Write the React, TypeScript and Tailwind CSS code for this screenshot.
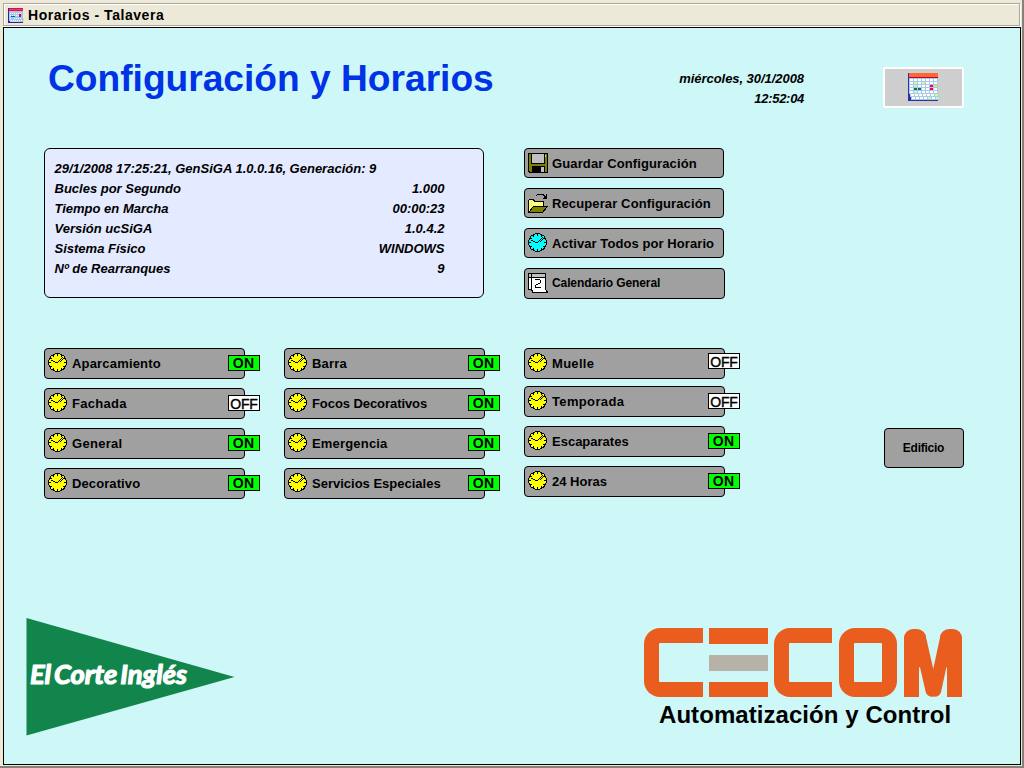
import React from "react";

const SANS = "font-['Liberation_Sans',Arial,sans-serif]";

function MonthSheet({ className }: { className: string }) {
  const cells: React.ReactNode[] = [];
  const marks: Record<string, string> = {
    "1-1": "#c8ff90", "1-3": "#c8ff90", "2-1": "#c8ff90", "2-5": "#ff0040", "2-6": "#c0f850",
    "3-1": "#087070", "3-2": "#087070", "3-5": "#ff0040", "4-1": "#c8ff90",
    "5-6": "#c8ff90", "6-4": "#c8ff90", "6-6": "#c8ff90",
  };
  for (let r = 0; r < 7; r++) {
    for (let c = 0; c < 7; c++) {
      const shift = r === 5 ? 1 : r === 6 ? 2 : 0;
      cells.push(
        <rect key={`${r}-${c}`} x={2 + c * 4 + shift} y={6 + r * 3} width={3} height={2} fill={marks[`${r}-${c}`] ?? "#fff"} />
      );
    }
  }
  return (
    <svg className={className} viewBox="0 0 32 28" shapeRendering="crispEdges" preserveAspectRatio="none">
      <rect x="0" y="0" width="30" height="28" fill="#3030a0" />
      <rect x="1" y="0" width="29" height="4" fill="#ff6830" />
      <rect x="1" y="4" width="29" height="1" fill="#c00030" />
      <rect x="1" y="5" width="29" height="16" fill="#a8c8f0" />
      <rect x="2" y="21" width="29" height="3" fill="#a8c8f0" />
      <rect x="3" y="24" width="29" height="3" fill="#a8c8f0" />
      {cells}
    </svg>
  );
}

function MiniSheet() {
  return (
    <svg className="h-[15px] w-4" viewBox="0 0 16 15" shapeRendering="crispEdges">
      <rect width="15" height="15" fill="#3020a0" />
      <rect x="1" width="14" height="3" fill="#f00838" />
      <rect x="1" y="1" width="14" height="1" fill="#d84868" />
      <rect x="1" y="3" width="14" height="10" fill="#a0c8f8" />
      <rect x="2" y="13" width="14" height="1" fill="#b8d8f8" />
      <path d="M2 5.5h12M2 7.5h12M2 10.5h12M3 12.5h12" stroke="#fff" strokeDasharray="1 1" />
      <path d="M3 8.5h4" stroke="#087070" />
      <rect x="11" y="6" width="2" height="3" fill="#d00038" />
      <path d="M3 6.5h2M13 7.5h1M3 10.5h2M14 11.5h2M12 13.5h3" stroke="#90d890" />
    </svg>
  );
}

function Clock({ color = "#ffff00" }: { color?: string }) {
  return (
    <svg className="size-[19px]" viewBox="0 0 19 19" shapeRendering="crispEdges">
      <circle cx="9.5" cy="9.5" r="9" fill={color} stroke="#000" />
      <path
        d="M9.5 1v2M9.5 16v2M1 9.500h2M16 9.500h2M5 2l1 2M2 5l2 1M14 17l-1 -2M17 14l-2 -1M5 17l1 -2M2 14l2 -1M14 2l-1 2M17 5l-2 1"
        stroke="#000"
        fill="none"
      />
      <g fill="#000">
        <rect x="3" y="7" width="2" height="1" />
        <rect x="5" y="8" width="2" height="1" />
        <rect x="7" y="9" width="3" height="1" />
        <rect x="10" y="8" width="1" height="1" />
        <rect x="11" y="7" width="1" height="1" />
        <rect x="12" y="6" width="1" height="1" />
        <rect x="13" y="5" width="1" height="1" />
        <rect x="14" y="4" width="1" height="1" />
        <rect x="12" y="8" width="1" height="1" />
        <rect x="13" y="7" width="1" height="1" />
        <rect x="14" y="6" width="1" height="1" />
      </g>
    </svg>
  );
}

function Floppy() {
  return (
    <svg className="size-5" viewBox="0 0 20 20" shapeRendering="crispEdges">
      <path d="M0 0h20v20h-19l-1 -1z" fill="#000" />
      <path d="M1 1h18v18h-17l-1 -1z" fill="#808000" />
      <rect x="3" y="0" width="14" height="11" fill="#000" />
      <rect x="4" y="1" width="12" height="9" fill="#c0c0c0" />
      <rect x="17" y="2" width="1" height="2" fill="#c0c0c0" />
      <rect x="4" y="13" width="13" height="6" fill="#000" />
      <rect x="13" y="14" width="3" height="5" fill="#c0c0c0" />
    </svg>
  );
}

function Folder() {
  return (
    <svg className="size-5" viewBox="0 0 20 20" shapeRendering="crispEdges">
      <defs>
        <pattern id="dither" width="2" height="2" patternUnits="userSpaceOnUse">
          <rect width="2" height="2" fill="#ffff00" />
          <rect width="1" height="1" fill="#fff" />
          <rect x="1" y="1" width="1" height="1" fill="#fff" />
        </pattern>
      </defs>
      <path d="M0.500 19V7.500l1 -1h4l1 2h9v5" fill="url(#dither)" stroke="#000" />
      <path d="M0.500 19.500l5 -6h14l-5 6z" fill="#808000" stroke="#000" />
      <path d="M8.500 2.500l2 -1.500h4l3 3M18.500 1v4h-4M16 4.500h2" fill="none" stroke="#000" />
    </svg>
  );
}

function CalendarTwo() {
  return (
    <svg className="size-5" viewBox="0 0 20 20" shapeRendering="crispEdges">
      <path d="M0.500 0.500h17v16l2 2.500h-15l-1 -3h-3z" fill="#fff" stroke="#000" />
      <rect x="1" y="1" width="16" height="3" fill="#c0c0c0" />
      <path d="M1 4.500h16M3.500 1v15" stroke="#000" />
      <path d="M7 6.500h5M12.500 7v3M12 10.500h-2M10 11.500h-2M8 12.500h-1M7 14.500h6M7.500 13v2" fill="none" stroke="#000" />
    </svg>
  );
}

function ActionButton({ icon, label, size = "h-[30px] w-[200px]", text = "pt-px text-[13px] tracking-[0.12px]" }: { icon: React.ReactNode; label: string; size?: string; text?: string }) {
  return (
    <button className={`flex items-start rounded-[4px] border border-black bg-[#a0a0a0] pt-1 pl-[3px] text-left font-bold whitespace-nowrap ${size}`}>
      <span className="flex w-6 shrink-0">{icon}</span>
      <span className={`leading-5 ${text}`}>{label}</span>
    </button>
  );
}

type ZoneInfo = { label: string; on: boolean; high?: boolean; tracking?: string };

function Zone({ label, on, high = false, tracking = "tracking-[0.18px]" }: ZoneInfo) {
  return (
    <div className="relative h-[31px] w-[201px]">
      <button className="flex h-full w-full items-start rounded-[4px] border border-black bg-[#a0a0a0] pt-1 pl-[3px] text-left text-[13px] font-bold whitespace-nowrap">
        <span className="flex w-6 shrink-0"><Clock /></span>
        <span className={`pt-px leading-5 ${tracking}`}>{label}</span>
      </button>
      <span
        className={`absolute left-[184px] flex h-4 w-8 items-center justify-center border border-black leading-none ${high ? "top-[5px]" : "top-[7px]"} ${
          on ? "bg-[#00ff00] pr-px text-[14px] font-bold tracking-[0.3px]" : "bg-white pt-px text-[14px] font-normal tracking-[-0.2px] [-webkit-text-stroke:0.4px_#000]"
        }`}
      >
        {on ? "ON" : "OFF"}
      </span>
    </div>
  );
}

const zones: ZoneInfo[][] = [
  [
    { label: "Aparcamiento", on: true },
    { label: "Fachada", on: false, tracking: "tracking-[0.3px]" },
    { label: "General", on: true, tracking: "tracking-[0.3px]" },
    { label: "Decorativo", on: true, tracking: "tracking-[0.1px]" },
  ],
  [
    { label: "Barra", on: true },
    { label: "Focos Decorativos", on: true, tracking: "tracking-[-0.07px]" },
    { label: "Emergencia", on: true },
    { label: "Servicios Especiales", on: true, tracking: "tracking-[0px]" },
  ],
  [
    { label: "Muelle", on: false, high: true, tracking: "tracking-[0.3px]" },
    { label: "Temporada", on: false, tracking: "tracking-[0.35px]" },
    { label: "Escaparates", on: true, tracking: "tracking-[0px]" },
    { label: "24 Horas", on: true, tracking: "tracking-[0px]" },
  ],
];

const info = [
  ["Bucles por Segundo", "1.000"],
  ["Tiempo en Marcha", "00:00:23"],
  ["Versión ucSiGA", "1.0.4.2"],
  ["Sistema Físico", "WINDOWS"],
  ["Nº de Rearranques", "9"],
];

function Pennant() {
  return (
    <svg className="h-[118px] w-[210px]" viewBox="0 0 210 118" role="img">
      <path d="M0.500 0v117.500L208.500 59z" fill="#12854c" />
      <text
        x="4"
        y="66"
        className="font-[Lato,sans-serif] text-[27px] font-bold italic"
        fill="#fff"
        stroke="#fff"
        strokeWidth="1.200"
        strokeLinejoin="round"
        wordSpacing="-3"
        textLength="157"
        lengthAdjust="spacingAndGlyphs"
      >
        El Corte Inglés
      </text>
    </svg>
  );
}

function CecomMark() {
  return (
    <div className="flex h-[69px] gap-[6px]">
      <div className="w-[59px] rounded-l-[16px] border-y-[15px] border-l-[15px] border-[#e95d1f]" />
      <div className="flex w-[59px] flex-col justify-between">
        <div className="h-4 bg-[#e95d1f]" />
        <div className="h-4 bg-[#b7b2a7]" />
        <div className="h-[15px] bg-[#e95d1f]" />
      </div>
      <div className="w-[58px] rounded-l-[16px] border-y-[15px] border-l-[15px] border-[#e95d1f]" />
      <div className="ml-px w-[58px] rounded-[16px] border-[15px] border-[#e95d1f]" />
      <svg className="ml-px h-[69px] w-[58px]" viewBox="0 0 58 69">
        <g stroke="#e95d1f" strokeWidth="15" fill="none">
          <line x1="7.500" y1="9" x2="7.500" y2="69" />
          <line x1="50.500" y1="9" x2="50.500" y2="69" />
          <line x1="15.500" y1="9" x2="27.800" y2="62.500" strokeWidth="12.500" strokeLinecap="round" />
          <line x1="42.500" y1="9" x2="31" y2="62.500" strokeWidth="12.500" strokeLinecap="round" />
          <line x1="12" y1="12" x2="20" y2="38" strokeWidth="12" />
          <line x1="46" y1="12" x2="38" y2="38" strokeWidth="12" />
        </g>
        <rect x="0" y="1" width="22" height="22" rx="9" fill="#e95d1f" />
        <rect x="36" y="1" width="22" height="22" rx="9" fill="#e95d1f" />
      </svg>
    </div>
  );
}

export default function App() {
  return (
    <div className={`flex h-[768px] w-[1024px] flex-col overflow-hidden border-r-2 border-b-2 border-[#85827a] bg-[#ece9d8] text-black ${SANS}`}>
      <header className="mt-[3px] ml-[3px] h-[23px] w-[1017px] shrink-0 border border-[#aca899] shadow-[1px_1px_0_#ffffff]">
        <div className="flex h-full items-center border-t border-l border-white pl-[3px]">
          <MiniSheet />
          <h1 className="ml-[4px] text-[14px] leading-5 font-bold tracking-[0.55px]">Horarios - Talavera</h1>
        </div>
      </header>
      <div className="mt-px flex h-[738px] shrink-0 pl-[3px]">
        <main className="flex h-[738px] w-[1018px] shrink-0 flex-col border border-black bg-[#cef7f7] pl-[40px]">
          <section className="flex h-[120px] items-start">
            <h2 className="mt-[28px] ml-[4px] w-[596px] text-[37.150px] leading-[44px] font-bold whitespace-nowrap text-[#0032e6]">Configuración y Horarios</h2>
            <div className="mt-[41px] w-[160px] text-right text-[13px] leading-5 font-bold tracking-[-0.05px] italic">
              <p>miércoles, 30/1/2008</p>
              <p className="tracking-[-0.3px]">12:52:04</p>
            </div>
            <button className="mt-[39px] ml-[79px] flex h-[41px] w-[81px] items-start rounded-[2px] border-2 border-white bg-[#cecece] pt-1 pl-[23px]">
              <MonthSheet className="h-7 w-8" />
            </button>
          </section>

          <section className="flex h-[200px] items-start gap-10">
            <div className="h-[150px] w-[440px] rounded-[6px] border border-black bg-[#e4eaff] pt-[10px] pl-[9.500px] text-[13px] leading-5 font-bold italic">
              <p className="whitespace-nowrap">29/1/2008 17:25:21, GenSiGA 1.0.0.16, Generación: 9</p>
              {info.map(([name, value]) => (
                <p key={name} className="flex w-[390px] justify-between">
                  <span>{name}</span>
                  <span>{value}</span>
                </p>
              ))}
            </div>
            <div className="flex flex-col gap-[10px]">
              <ActionButton icon={<Floppy />} label="Guardar Configuración" />
              <ActionButton icon={<Folder />} label="Recuperar Configuración" />
              <ActionButton icon={<Clock color="#00ffff" />} label="Activar Todos por Horario" text="pt-px text-[13px] tracking-[0.08px]" />
              <ActionButton icon={<CalendarTwo />} label="Calendario General" size="h-[31px] w-[201px]" text="text-[12px] tracking-[-0.1px]" />
            </div>
          </section>

          <section className="flex h-[270px] items-start">
            {zones.map((column, i) => (
              <div key={i} className="flex w-[240px] flex-col gap-[9px]">
                {column.map((zone, j) => (
                  <div key={zone.label} className={i === 2 && j === 1 ? "-mt-[2px]" : ""}>
                    <Zone {...zone} />
                  </div>
                ))}
              </div>
            ))}
            <button className="mt-20 ml-[120px] h-10 w-20 rounded-[4px] border border-black bg-[#a0a0a0] pr-px text-[12px] font-bold tracking-[-0.25px]">Edificio</button>
          </section>

          <footer className="flex items-start">
            <div className="-ml-[18px]"><Pennant /></div>
            <div className="mt-[10px] ml-[408px]">
              <CecomMark />
              <p className="mt-[3px] ml-[15px] text-[24px] leading-[30px] font-bold tracking-[0.06px] whitespace-nowrap">Automatización y Control</p>
            </div>
          </footer>
        </main>
      </div>
    </div>
  );
}
